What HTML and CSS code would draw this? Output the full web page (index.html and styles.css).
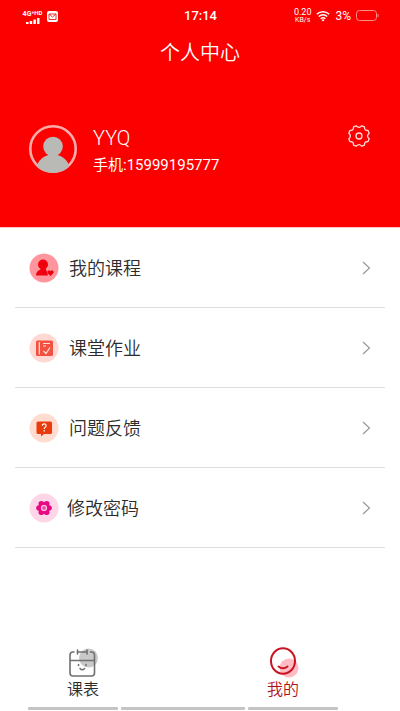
FILE: index.html
```html
<!DOCTYPE html>
<html lang="zh-CN">
<head>
<meta charset="utf-8">
<meta name="viewport" content="width=device-width, initial-scale=1">
<title>个人中心</title>
<link rel="stylesheet" href="styles.css">
</head>
<body>
<header class="hero">
  <div class="status">
    <div class="status-left">
      <div class="signal">
        <span class="network">4G⁺<small>HD</small></span>
        <svg width="14" height="6" viewBox="0 0 14 6" fill="#fff" aria-hidden="true"><path d="M0 4h2.500v2H0zM3.700 3h2.500v3H3.700zM7.400 1.500h2.500V6H7.400zM11 0h2.500v6H11z"/></svg>
      </div>
      <svg width="11" height="11" viewBox="0 0 11 11" aria-hidden="true"><rect width="11" height="11" rx="2" fill="#fff"/><path d="M2 3h7v5.500H2zM2 3l3.500 3L9 3" fill="none" stroke="#e33" stroke-width="1"/></svg>
    </div>
    <time class="clock">17:14</time>
    <div class="status-right">
      <div class="speed"><span>0.20</span><small>KB/s</small></div>
      <svg width="14" height="12" viewBox="0 0 14 12" fill="none" stroke="#fff" stroke-width="1.500" aria-hidden="true"><path d="M.8 4.200a9 9 0 0 1 12.400 0M2.800 6.500a6 6 0 0 1 8.400 0M4.700 8.700a3.500 3.500 0 0 1 4.600 0"/><path d="M7 11.500L5.500 10a2.200 2.200 0 0 1 3 0z" fill="#fff" stroke="none"/></svg>
      <span class="percent">3%</span>
      <svg width="23" height="12" viewBox="0 0 23 12" fill="none" stroke="#ff8c8c" aria-hidden="true"><rect x=".5" y=".5" width="20" height="10" rx="3"/><path d="M22 4v3"/></svg>
    </div>
  </div>
  <h1 class="title">个人中心</h1>
  <div class="profile">
    <svg class="avatar" viewBox="0 0 48 48" aria-hidden="true">
      <defs><clipPath id="face"><circle cx="24" cy="24" r="23"/></clipPath></defs>
      <circle cx="24" cy="24" r="22.700" fill="none" stroke="#ffabab" stroke-width="2.600"/>
      <g clip-path="url(#face)" fill="#b9bab5"><circle cx="24" cy="21.500" r="9.800"/><path d="M7 43c2-8 8-12 14-13.500h6C33 31 39 35 41 43v5H7z"/></g>
      <path d="M9 41a22.700 22.700 0 0 0 30 0" fill="none" stroke="#b9bab5" stroke-width="2.600"/>
    </svg>
    <div class="identity">
      <div class="name">YYQ</div>
      <div class="phone">手机:15999195777</div>
    </div>
    <button class="settings" type="button" aria-label="设置">
      <svg width="24" height="22" viewBox="0 1 24 22" fill="none" stroke="#ffdada" stroke-width="1.300" stroke-linejoin="round" aria-hidden="true"><path d="M9.200 1.800Q12 5 14.800 1.800L17.500 2.900Q17.300 6.700 21.100 6.500L22.200 9.200Q19 12 22.200 14.800L21.100 17.500Q17.300 17.300 17.500 21.100L14.800 22.200Q12 19 9.200 22.200L6.500 21.100Q6.700 17.300 2.900 17.500L1.800 14.800Q5 12 1.800 9.200L2.900 6.500Q6.700 6.700 6.500 2.900Z"/><circle cx="12" cy="12" r="3"/></svg>
    </button>
  </div>
</header>
<main class="menu">
  <a class="row" href="#courses">
    <svg class="badge" viewBox="0 0 30 30" aria-hidden="true"><circle cx="15" cy="15" r="14.500" fill="#ff969d"/><g fill="#f0000c"><circle cx="14" cy="11.500" r="5"/><path d="M11.500 15h5l1.500 4 1 3.500H7c0-3 1.500-5 4.500-6z"/><path d="M21.500 23l-3-3a1.700 1.700 0 0 1 3-1.700 1.700 1.700 0 0 1 3 1.700z"/></g></svg>
    <span class="label">我的课程</span>
    <svg class="chevron" viewBox="0 0 9 14" aria-hidden="true"><path d="M1 1l6.500 6L1 13"/></svg>
  </a>
  <a class="row" href="#homework">
    <svg class="badge" viewBox="0 0 30 30" aria-hidden="true"><circle cx="15" cy="15" r="14.500" fill="#ffd7d3"/><rect x="7" y="7.500" width="17" height="15.500" rx="1.500" fill="#f25142"/><path d="M10.300 9v12.500M14 10.500h7M14 13h3M14.500 18l2.500 2.500 4-6" fill="none" stroke="#ffe3da" stroke-width="1.200"/></svg>
    <span class="label">课堂作业</span>
    <svg class="chevron" viewBox="0 0 9 14" aria-hidden="true"><path d="M1 1l6.500 6L1 13"/></svg>
  </a>
  <a class="row" href="#feedback">
    <svg class="badge" viewBox="0 0 30 30" aria-hidden="true"><circle cx="15" cy="15" r="14.500" fill="#ffdccf"/><path d="M9 8.500h12.500a1.500 1.500 0 0 1 1.500 1.500v9.500a1.500 1.500 0 0 1-1.500 1.500H15l-3 2.500V21H9a1.500 1.500 0 0 1-1.500-1.500V10A1.500 1.500 0 0 1 9 8.500z" fill="#ea3b0d"/><path d="M13.300 12.700c0-2.600 4-2.400 3.800 0-.1 1.400-1.900 1.500-1.900 3.300M15.200 17v1.500" fill="none" stroke="#fff" stroke-width="1.200"/></svg>
    <span class="label">问题反馈</span>
    <svg class="chevron" viewBox="0 0 9 14" aria-hidden="true"><path d="M1 1l6.500 6L1 13"/></svg>
  </a>
  <a class="row row-tight" href="#password">
    <svg class="badge" viewBox="0 0 30 30" aria-hidden="true"><circle cx="15" cy="15" r="14.500" fill="#ffd5e8"/><g fill="#e60b83"><circle cx="15" cy="15" r="6"/><circle cx="10" cy="15" r="2.800"/><circle cx="20" cy="15" r="2.800"/><circle cx="12.300" cy="10.800" r="2.800"/><circle cx="17.700" cy="10.800" r="2.800"/><circle cx="12.300" cy="19.200" r="2.800"/><circle cx="17.700" cy="19.200" r="2.800"/></g><circle cx="15" cy="15" r="2.500" fill="#ef4ba4" stroke="#ffd5e8" stroke-width="1.100"/></svg>
    <span class="label">修改密码</span>
    <svg class="chevron" viewBox="0 0 9 14" aria-hidden="true"><path d="M1 1l6.500 6L1 13"/></svg>
  </a>
</main>
<footer class="bottom">
  <nav class="tabs">
    <a class="tab" href="#schedule">
      <svg width="32" height="32" viewBox="0 0 32 32" fill="none" stroke="#707070" stroke-width="1.600" stroke-linecap="round" aria-hidden="true"><circle cx="21.500" cy="12" r="9.500" fill="#c9c9c9" stroke="none"/><path d="M7 6H6a3 3 0 0 0-3 3v18a3 3 0 0 0 3 3h18.500a3 3 0 0 0 3-3V9a3 3 0 0 0-3-3h-1M10.500 6h9.500M10.500 4v4M20 4v4M3 14.500h24.500M11.500 18.500v1M19 18.500v1M13 22.500q2.300 2.500 4.600 0"/></svg>
      <span>课表</span>
    </a>
    <a class="tab tab-active" href="#mine" aria-current="page">
      <svg width="32" height="32" viewBox="0 0 32 32" fill="none" stroke="#c81420" stroke-width="2" stroke-linecap="round" aria-hidden="true"><circle cx="22" cy="22" r="9.500" fill="#ffbcc5" stroke="none"/><ellipse cx="16" cy="15" rx="12" ry="12.800"/><path d="M11.500 20.500q4.500 3.500 9 0"/></svg>
      <span>我的</span>
    </a>
  </nav>
  <div class="handles"><i></i><i class="wide"></i><i></i></div>
</footer>
</body>
</html>
```
FILE: styles.css
```css
* { box-sizing: border-box; }

body {
  margin: 0;
  min-height: 100vh;
  display: flex;
  flex-direction: column;
  background: #fff;
  color: #2c2c2c;
  font-family: Roboto, "Noto Sans CJK SC", sans-serif;
  font-weight: 350;
}

a { color: inherit; text-decoration: none; }
svg { display: block; flex: none; }

.hero {
  padding-bottom: 51px;
  background: #fc0000;
  border-bottom: 1px solid #ffc0c0;
  color: #fff;
}

.status {
  display: grid;
  grid-template-columns: 1fr auto 1fr;
  align-items: center;
  height: 32px;
  padding: 0 21px 0 22px;
}

.status-left,
.status-right { display: flex; align-items: center; gap: 4px; }
.status-right { justify-content: flex-end; gap: 5px; }

.signal { display: flex; flex-direction: column; align-items: center; width: 21px; }
.network { font-size: 7px; line-height: 7px; font-weight: 700; white-space: nowrap; }
.network small { font-size: 6px; vertical-align: 1px; }

.clock { font-size: 13px; font-weight: 500; line-height: 16px; }

.speed { display: flex; flex-direction: column; align-items: center; font-size: 9px; line-height: 9px; font-weight: 400; }
.speed small { font-size: 7px; line-height: 7px; }
.percent { font-size: 12px; font-weight: 400; }

.title { margin: 6px 0 0; text-align: center; font-size: 20px; line-height: 30px; font-weight: 350; }

.profile { display: flex; align-items: flex-start; padding: 57px 29px 0; }
.avatar { width: 48px; height: 48px; }
.identity { flex: 1; margin-left: 16px; }
.name { font-size: 20px; line-height: 26px; }
.phone { font-size: 15px; line-height: 22px; padding-top: 3px; font-weight: 400; }

.settings { padding: 0; border: 0; background: none; cursor: pointer; }

.menu { padding: 0 15px; }
.row {
  display: flex;
  align-items: center;
  height: 80px;
  padding: 0 14px;
  border-bottom: 1px solid #dedede;
}
.badge { width: 30px; height: 30px; }
.label { flex: 1; margin-left: 10px; padding-top: 2px; font-size: 18px; line-height: 26px; }
.row-tight .label { margin-left: 8px; }
.chevron { width: 9px; height: 14px; fill: none; stroke: #999; stroke-width: 1.2px; }

.bottom { margin-top: auto; }
.tabs { display: grid; grid-template-columns: 1fr 1fr; }
.tab {
  display: flex;
  flex-direction: column;
  align-items: center;
  padding-right: 34px;
  font-size: 16px;
  line-height: 24px;
}
.tab-active { color: #b0101c; }

.handles { display: flex; gap: 3px; padding: 5px 62px 1px 28px; }
.handles i { flex: 90; height: 3px; border-radius: 1px; background: #c4c4c4; }
.handles .wide { flex: 124; }
```
